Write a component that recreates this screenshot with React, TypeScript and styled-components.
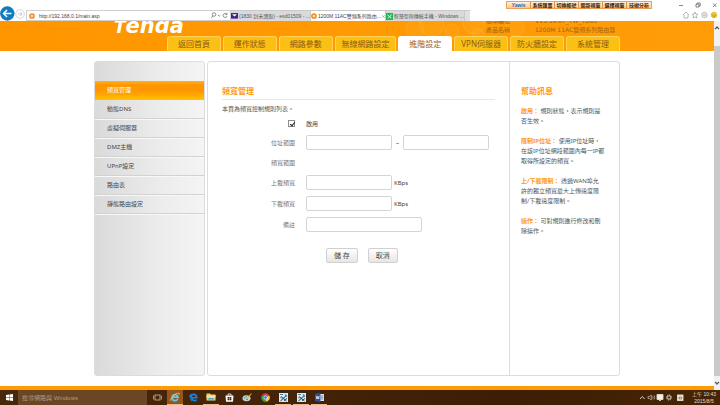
import React from "react";
import styled, { createGlobalStyle } from "styled-components";

const ui = `"Liberation Sans", "Noto Sans CJK TC", sans-serif`;
const page = `"Noto Sans", "Noto Sans CJK TC", sans-serif`;

const GlobalStyle = createGlobalStyle`
  * { box-sizing: border-box; }
  body { margin: 0; background: #fff; font-family: ${page}; font-size: 6px; color: #555; }
  button, input { font: inherit; color: inherit; margin: 0; padding: 0; }
  button { border: 0; background: none; }
  a { color: inherit; text-decoration: none; }
  svg { display: block; flex: none; }
`;

const Screen = styled.div`
  display: flex;
  flex-direction: column;
  height: 100vh;
  overflow: hidden;
`;

/* ---------- browser frame ---------- */

const Chrome = styled.header`
  display: flex;
  align-items: flex-end;
  height: 21px;
  flex: none;
  font-family: ${ui};
  font-size: 5px;
  line-height: 10px;
`;

const RoundButton = styled.button`
  display: flex;
  flex: none;
`;

const AddressBar = styled.div`
  display: flex;
  align-items: center;
  gap: 4px;
  width: 205px;
  height: 11px;
  margin-left: 1px;
  padding: 0 2px;
  border: 1px solid #cfcfcf;
  background: #fff;
`;

const UrlInput = styled.input`
  flex: 1;
  min-width: 0;
  height: 9px;
  border: 0;
  outline: 0;
  background: none;
  color: #444;
`;

const BrowserTabs = styled.div`
  display: flex;
  flex: none;
  height: 11px;
`;

const BrowserTab = styled.button<{ $active?: boolean }>`
  display: flex;
  align-items: center;
  gap: 1px;
  padding: 0;
  border: 1px solid #c9c9c9;
  border-width: 1px 1px 0 0;
  background: ${(p) => (p.$active ? "#fff" : "#dadada")};
  color: ${(p) => (p.$active ? "#444" : "#555")};
  white-space: nowrap;
`;

const NewTab = styled.button`
  width: 5px;
  background: #e0e0e0;
  border-top: 1px solid #c9c9c9;
`;

const WindowArea = styled.div`
  flex: 1;
  display: flex;
  justify-content: flex-end;
  align-self: stretch;
  align-items: flex-start;
`;

const QuickBar = styled.div`
  display: flex;
  margin: 1px 22px 0 0;
  height: 8px;
  border: 1px solid #e9a25c;
  background: linear-gradient(#fff3e2, #ffc684);
`;

const QuickButton = styled.button<{ $brand?: boolean }>`
  width: 24px;
  border-right: 1px solid #e58f3c;
  color: ${(p) => (p.$brand ? "#2a62b8" : "#3a1d08")};
  font-weight: 700;
  font-style: ${(p) => (p.$brand ? "italic" : "normal")};
  line-height: 6px;
  white-space: nowrap;
  &:last-child { border-right: 0; }
`;

const WindowTools = styled.div`
  display: grid;
  grid-template-rows: 10px 9px;
  width: 44px;
  margin-right: 2px;
`;

const IconRow = styled.div`
  display: flex;
  align-items: center;
  justify-content: flex-end;
`;

/* ---------- router page ---------- */

const Viewport = styled.div`
  display: flex;
  flex: 1;
  min-height: 0;
`;

const Page = styled.div`
  display: flex;
  flex-direction: column;
  flex: 1;
  min-width: 0;
`;

const Banner = styled.div`
  position: relative;
  display: flex;
  align-items: flex-end;
  justify-content: center;
  height: 30px;
  flex: none;
  overflow: hidden;
  background: linear-gradient(90deg, #ff9600, #ff9c08);
`;

const Bubbles = styled.svg`
  position: absolute;
  top: 0;
  left: 390px;
`;

const BannerInner = styled.div`
  position: relative;
  display: flex;
  flex-direction: column;
  width: 100%;
  max-width: 526px;
  padding-left: 20px;
`;

const BrandLine = styled.div`
  display: flex;
  justify-content: space-between;
  align-items: flex-end;
  height: 22px;
`;

const Logo = styled.div`
  font: italic 700 21px/24px "DejaVu Sans", sans-serif;
  color: #fff;
  height: 22px;
  small { font-size: 17px; }
`;

const ProductInfo = styled.dl`
  display: grid;
  grid-template-columns: 49px 86px;
  grid-auto-rows: 9px;
  align-content: end;
  margin: 0 -1px 2px 0;
  font: 6px/9px "DejaVu Sans", "Noto Sans CJK TC", sans-serif;
  color: #a4660c;
  white-space: nowrap;
  dt, dd { margin: 0; }
`;

const Nav = styled.nav`
  display: flex;
  gap: 2px;
  margin-left: 53px;
`;

const NavTab = styled.a<{ $active?: boolean; $wide?: boolean }>`
  flex: ${(p) => (p.$wide ? "62 1 0" : "54 1 0")};
  height: 15px;
  border: 1px solid ${(p) => (p.$active ? "#fff" : "#ffd358")};
  border-bottom: 0;
  border-radius: 3px 3px 0 0;
  background: ${(p) => (p.$active ? "#fff" : "#fcc014")};
  color: ${(p) => (p.$active ? "#a0622a" : "#8a5a16")};
  font-size: 8px;
  line-height: 13px;
  text-align: center;
  white-space: nowrap;
`;

const Main = styled.main`
  display: flex;
  gap: 2px;
  flex: 1;
  width: 100%;
  max-width: 526px;
  margin: 0 auto;
  padding: 10px 0;
`;

const Sidebar = styled.aside`
  width: 111px;
  padding-top: 19px;
  border: 1px solid #dcdcdc;
  border-radius: 3px;
  background: linear-gradient(90deg, #dadada, #ececec 60%, #f4f4f4);
`;

const MenuItem = styled.a<{ $active?: boolean }>`
  display: block;
  height: 19px;
  padding-left: 12px;
  border-bottom: 1px solid ${(p) => (p.$active ? "#ffc400" : "#d2d2d2")};
  box-shadow: ${(p) => (p.$active ? "none" : "0 1px 0 #f8f8f8")};
  background: ${(p) =>
    p.$active ? "linear-gradient(#ffb21a, #ff9400 25%, #ff9a00 60%, #ffbe00)" : "transparent"};
  color: ${(p) => (p.$active ? "#fff" : "#444")};
  line-height: 18px;
`;

const Panel = styled.div`
  display: flex;
  flex: 1;
  border: 1px solid #dcdcdc;
  border-radius: 3px;
  background: #fff;
`;

const Content = styled.section`
  flex: 1;
  padding: 20px 14px 0;
`;

const Heading = styled.h2<{ $ruled?: boolean }>`
  margin: 0 0 ${(p) => (p.$ruled ? 4 : 6)}px;
  height: 18px;
  border-bottom: ${(p) => (p.$ruled ? "1px solid #e8e8e8" : "0")};
  color: #ff9a10;
  font-size: 8px;
  line-height: 17px;
`;

const Intro = styled.p`
  margin: 0 0 3px;
  line-height: 11px;
`;

const Form = styled.form`
  display: grid;
  row-gap: 6px;
`;

const Row = styled.div<{ $h: number }>`
  display: grid;
  grid-template-columns: 73px 1fr;
  column-gap: 11px;
  align-items: center;
  height: ${(p) => p.$h}px;
  white-space: nowrap;
`;

const RowLabel = styled.label`
  text-align: right;
  color: #777;
`;

const Field = styled.div`
  display: flex;
  align-items: center;
  gap: 2px;
  color: #444;
`;

const TextInput = styled.input<{ $wide?: boolean }>`
  width: ${(p) => (p.$wide ? 116 : 86)}px;
  height: 15px;
  padding: 0 3px;
  border: 1px solid #d4d4d4;
  border-radius: 2px;
  background: #fff;
`;

const Dash = styled.span`
  width: 7px;
  text-align: center;
`;

const CheckBox = styled.input`
  appearance: none;
  justify-self: end;
  width: 7px;
  height: 7px;
  border: 1px solid #8c8c8c;
  background: #fff;
  &:checked::before {
    content: "";
    display: block;
    width: 2px;
    height: 4px;
    margin-left: 2px;
    border: solid #222;
    border-width: 0 1px 1px 0;
    transform: rotate(40deg);
  }
`;

const Actions = styled.div`
  display: flex;
  gap: 10px;
  margin: 10px 0 0 104px;
`;

const ActionButton = styled.button`
  height: 15px;
  padding: 0 7px;
  border: 1px solid #d0d0d0;
  border-radius: 2px;
  background: linear-gradient(#fff, #e6e6e6);
  color: #444;
  font-size: 7px;
  line-height: 13px;
`;

const Help = styled.aside`
  width: 110px;
  padding: 20px 0 0 11px;
  border-left: 1px solid #dcdcdc;
  p { margin: 0 0 10px; line-height: 10px; white-space: nowrap; }
  strong { color: #ff9a10; }
`;

const Footer = styled.footer`
  height: 4px;
  background: #ff9a00;
`;

const ScrollBar = styled.div`
  display: flex;
  flex-direction: column;
  align-items: center;
  width: 6px;
  padding: 5px 0;
  background: #f1f1f1;
`;

const ScrollThumb = styled.div`
  flex: 1;
  align-self: stretch;
  margin: 16px 0 5px;
  background: #cacaca;
`;

/* ---------- taskbar ---------- */

const Taskbar = styled.footer`
  display: flex;
  height: 15px;
  flex: none;
  background: linear-gradient(90deg, #4a260a, #442308 40%, #3d1e04 70%, #462406);
  color: #e9dccf;
`;

const StartButton = styled.button`
  display: grid;
  place-items: center;
  width: 18px;
`;

const SearchInput = styled.input`
  width: 129px;
  border: 0;
  padding-left: 4px;
  background: #6a4624;
  font-family: ${ui};
  &::placeholder { color: #b49a80; opacity: 1; }
`;

const TaskButton = styled.button<{ $state?: "open" | "active" }>`
  display: grid;
  place-items: center;
  width: 16px;
  margin-left: 2px;
  border-bottom: 1px solid ${(p) => (p.$state ? "#e8b48a" : "transparent")};
  background: ${(p) => (p.$state === "active" ? "#94561c" : "transparent")};
`;

const Tray = styled.div`
  display: flex;
  align-items: center;
  gap: 3px;
  margin-left: auto;
`;

const Clock = styled.time`
  width: 26px;
  margin: 0 3px 0 4px;
  font-family: ${ui};
  font-size: 5px;
  line-height: 7px;
  text-align: center;
  white-space: nowrap;
`;

/* ---------- icons ---------- */

const BackIcon = () => (
  <svg width="15" height="15" viewBox="0 0 15 15">
    <circle cx="7.3" cy="7.5" r="7.2" fill="#0f7bc0" />
    <path d="M11.5 7.5H4M7 4L3.6 7.5L7 11" fill="none" stroke="#fff" strokeWidth="1.6" />
  </svg>
);

const ForwardIcon = () => (
  <svg width="10" height="13" viewBox="0 0 10 13">
    <circle cx="5" cy="6" r="4.3" fill="#fff" stroke="#c4c4c4" strokeWidth=".7" />
    <path d="M2.8 6H7M5.3 4L7.2 6L5.3 8" fill="none" stroke="#bbb" strokeWidth=".8" />
  </svg>
);

const SiteIcon = () => (
  <svg width="6" height="6" viewBox="0 0 6 6">
    <circle cx="3" cy="3" r="2.1" fill="#fff" stroke="#f28a1c" strokeWidth="1.5" />
    <circle cx="3" cy="3" r=".7" fill="#f28a1c" />
  </svg>
);

const SearchRefresh = () => (
  <svg width="17" height="7" viewBox="0 0 17 7" fill="none" stroke="#666" strokeWidth=".7">
    <circle cx="3" cy="2.5" r="1.8" />
    <path d="M1.8 3.9L.3 6" />
    <path d="M7 3L8.2 4.2L9.4 3" />
    <path d="M15.7 2.3A2 2 0 1 0 16 4M16 .8V2.6H14.3" />
  </svg>
);

const MailIcon = () => (
  <svg width="7" height="6" viewBox="0 0 7 6">
    <rect width="7" height="5.6" fill="#4a1d96" />
    <path d="M1 1.2H6L3.5 3.6Z" fill="#fff" />
  </svg>
);

const GreenIcon = () => (
  <svg width="7" height="7" viewBox="0 0 7 7">
    <rect width="7" height="7" fill="#23b45a" />
    <path d="M1.5 2L5.5 5M5.5 1.5L2 5.5" stroke="#d9ffe5" strokeWidth="1" />
  </svg>
);

const CloseX = () => (
  <svg width="3" height="3" viewBox="0 0 3 3">
    <path d="M.3.3L2.7 2.7M2.7.3L.3 2.7" stroke="#777" strokeWidth=".5" />
  </svg>
);

const WinControls = () => (
  <svg width="40" height="8" viewBox="0 0 40 8" fill="none" stroke="#555" strokeWidth=".7">
    <path d="M1 4.5H5" />
    <path d="M18 3.2H21V6H18ZM19 3.2V2H22.2V5H21" />
    <path d="M35 2.5L38.4 6M38.4 2.5L35 6" />
  </svg>
);

const PageTools = () => (
  <svg width="36" height="8" viewBox="0 0 36 8" fill="none" stroke="#9a9a9a" strokeWidth=".7">
    <path d="M1 4L4 1L7 4M2 3.5V7H6V3.5" />
    <path d="M13 1L13.9 3.1L16 3.3L14.4 4.8L14.9 7L13 5.9L11.1 7L11.6 4.8L10 3.3L12.1 3.1Z" />
    <circle cx="22.5" cy="4" r="2.7" />
    <circle cx="22.5" cy="4" r="1" />
    <circle cx="32" cy="4" r="2.8" fill="#f7cf3e" stroke="#d9a91e" />
    <path d="M30.6 4.6Q32 6 33.4 4.6M31 3V3.5M33 3V3.5" stroke="#7b5a00" />
  </svg>
);

const Arrow = ({ up }: { up?: boolean }) => (
  <svg width="6" height="4" viewBox="0 0 6 4">
    <path d={up ? "M1 3.2L3 1L5 3.2" : "M1 .8L3 3L5 .8"} fill="none" stroke="#555" strokeWidth="1.2" />
  </svg>
);

const WindowsIcon = () => (
  <svg width="7" height="7" viewBox="0 0 7 7" fill="#fff">
    <path d="M0 1L3 .6V3.3H0ZM3.4.5L7 0V3.3H3.4ZM0 3.7H3V6.4L0 6ZM3.4 3.7H7V7L3.4 6.5Z" />
  </svg>
);

const TaskViewIcon = () => (
  <svg width="9" height="7" viewBox="0 0 9 7" fill="none" stroke="#c9b8a6" strokeWidth=".8">
    <rect x="2" y="1" width="5" height="5" />
    <path d="M.6 1.5V5.5M8.4 1.5V5.5" />
  </svg>
);

const IeIcon = () => (
  <svg width="10" height="10" viewBox="0 0 10 10" fill="none">
    <path d="M7.9 6.6A3 3 0 1 1 8 5.2H3" stroke="#5cc8f5" strokeWidth="1.7" />
    <path d="M1 9C-.6 7 5 1 9 1C9.8 1.4 9 2.4 8.6 3" stroke="#f5d24c" strokeWidth=".8" />
  </svg>
);

const EdgeIcon = () => (
  <svg width="9" height="9" viewBox="0 0 9 9" fill="none">
    <path d="M.8 4.2C1.6.4 7.6.2 7.8 4.8H3C3 8 6 8 7.6 7" stroke="#1683e0" strokeWidth="1.6" />
    <path d="M3.4 2.6C1.2 4 1.2 7 3.4 8" stroke="#1683e0" strokeWidth="1.2" />
  </svg>
);

const FolderIcon = () => (
  <svg width="10" height="8" viewBox="0 0 10 8">
    <path d="M.5 .5H4L5 1.5H9.5V7.5H.5Z" fill="#f3cd62" />
    <rect x=".5" y="2.5" width="9" height="2" fill="#fbe6a0" />
    <path d="M2.5 7.8V5H7.5V7.8H6.3V6.3H3.7V7.8Z" fill="#3aa7dd" />
  </svg>
);

const StoreIcon = () => (
  <svg width="9" height="9" viewBox="0 0 9 9">
    <path d="M3 2.5V1H6V2.5" fill="none" stroke="#fff" strokeWidth=".8" />
    <path d="M.5 2.5H8.5L8 8.7H1Z" fill="#fff" />
    <path d="M2.6 4H4.2V5.4H2.6ZM4.6 4H6.4V5.4H4.6ZM2.6 5.8H4.2V7.3H2.6ZM4.6 5.8H6.4V7.3H4.6Z" fill="#442308" />
  </svg>
);

const PaintIcon = () => (
  <svg width="10" height="9" viewBox="0 0 10 9">
    <ellipse cx="4.5" cy="5.2" rx="4" ry="3" fill="#c8d6dc" />
    <circle cx="2.5" cy="5" r=".8" fill="#3b8ed0" />
    <circle cx="4.2" cy="3.7" r=".8" fill="#58a847" />
    <circle cx="5" cy="6.4" r=".8" fill="#d0472e" />
    <path d="M9.5 .5L5.5 5" stroke="#e8a33c" strokeWidth="1.1" />
  </svg>
);

const ChromeIcon = () => (
  <svg width="9" height="9" viewBox="0 0 9 9">
    <path d="M4.5 4.5L.8 2.3A4.3 4.3 0 0 1 8.3 2.4Z" fill="#e2412f" />
    <path d="M4.5 4.5L8.3 2.4A4.3 4.3 0 0 1 4.4 8.8Z" fill="#f8cc30" />
    <path d="M4.5 4.5L4.4 8.8A4.3 4.3 0 0 1 .8 2.3Z" fill="#35a34e" />
    <circle cx="4.5" cy="4.5" r="1.9" fill="#fff" />
    <circle cx="4.5" cy="4.5" r="1.4" fill="#3f7ee8" />
  </svg>
);

const ToolIcon = () => (
  <svg width="9" height="9" viewBox="0 0 9 9">
    <rect width="9" height="9" fill="#dfeaf0" />
    <path d="M1 1.5H4M6 1.5L8 3.5M1.5 8L7.5 2.5" stroke="#3382ae" strokeWidth="1.1" />
    <path d="M2 3.5L7.5 8M5 7.8L8 5.4" stroke="#33424e" strokeWidth="1" />
    <circle cx="2" cy="4.6" r=".8" fill="#d2543c" />
  </svg>
);

const WordIcon = () => (
  <svg width="9" height="9" viewBox="0 0 9 9">
    <rect x="4" y="1" width="5" height="7" fill="#dbe5f5" />
    <path d="M5.5 2.8H8.3M5.5 4.4H8.3M5.5 6H8.3" stroke="#3b64a8" strokeWidth=".6" />
    <path d="M0 1L5.4 0V9L0 8Z" fill="#2a5699" />
    <path d="M1.2 3L1.9 6L2.7 3.4L3.5 6L4.2 3" fill="none" stroke="#fff" strokeWidth=".7" />
  </svg>
);

const TrayIcons = () => (
  <svg width="45" height="9" viewBox="0 0 45 9" fill="none" stroke="#e6dccf" strokeWidth=".9">
    <path d="M1 6L3.3 3.5L5.6 6" />
    <path d="M9 3.5H10.5L12.3 2V7L10.5 5.5H9ZM13.6 3.2Q14.6 4.5 13.6 5.8M15 2.3Q16.6 4.5 15 6.7" strokeWidth=".6" />
    <path d="M18 1.5H24V6.5H22L21 8L20 6.5H18Z" fill="#f5efe8" />
    <circle cx="30" cy="4.5" r="1.7" />
    <circle cx="30" cy="4.5" r="2.6" strokeDasharray="1 1" />
    <rect x="38.5" y="2" width="5.5" height="5.5" fill="#f5efe8" />
    <path d="M40 4H42.6V6H40Z" stroke="#5a3a1c" strokeWidth=".6" />
  </svg>
);

/* ---------- data ---------- */

const navItems = ["返回首頁", "運作狀態", "網路參數", "無線網路設定", "進階設定", "VPN伺服器", "防火牆設定", "系統管理"];
const menuItems = ["頻寬管理", "動態DNS", "虛擬伺服器", "DMZ主機", "UPnP設定", "路由表", "靜態路由設定"];
const quickItems = ["系統匯置", "切換帳號", "關新視窗", "選擇視窗", "技術分析"];

const helpItems: { term: string; lines: string[] }[] = [
  { term: "啟用：", lines: ["規則狀態，表示規則是", "否生效。"] },
  { term: "限制IP位址：", lines: ["使用IP位址時，", "在該IP位址網段範圍內每一IP都", "取得所設定的頻寬。"] },
  { term: "上/下載限制：", lines: ["透過WAN埠允", "許的獨立頻寬最大上傳速度限", "制/下載速度限制。"] },
  { term: "操作：", lines: ["可對規則進行修改和刪", "除操作。"] },
];

const tasks: { name: string; icon: React.ReactNode; state?: "open" | "active" }[] = [
  { name: "工作檢視", icon: <TaskViewIcon /> },
  { name: "Internet Explorer", icon: <IeIcon />, state: "active" },
  { name: "Edge", icon: <EdgeIcon /> },
  { name: "檔案總管", icon: <FolderIcon />, state: "open" },
  { name: "市集", icon: <StoreIcon /> },
  { name: "小畫家", icon: <PaintIcon /> },
  { name: "Chrome", icon: <ChromeIcon /> },
  { name: "工具一", icon: <ToolIcon />, state: "open" },
  { name: "工具二", icon: <ToolIcon />, state: "open" },
  { name: "Word", icon: <WordIcon />, state: "open" },
];

export default function App() {
  return (
    <Screen>
      <GlobalStyle />
      <Chrome>
        <RoundButton aria-label="上一頁"><BackIcon /></RoundButton>
        <RoundButton aria-label="下一頁"><ForwardIcon /></RoundButton>
        <AddressBar>
          <SiteIcon />
          <UrlInput aria-label="網址" defaultValue="http://192.168.0.1/main.asp" />
          <SearchRefresh />
        </AddressBar>
        <BrowserTabs>
          <BrowserTab><MailIcon />(1830 封未讀取) - esd01509 - ...</BrowserTab>
          <BrowserTab $active><SiteIcon />1200M 11AC雙頻系列路由...<CloseX /></BrowserTab>
          <BrowserTab><GreenIcon />智慧型與傳統手機 - Windows ...</BrowserTab>
          <NewTab aria-label="新索引標籤" />
        </BrowserTabs>
        <WindowArea>
          <QuickBar>
            <QuickButton $brand>Yawis</QuickButton>
            {quickItems.map((t) => <QuickButton key={t}>{t}</QuickButton>)}
          </QuickBar>
          <WindowTools>
            <IconRow><WinControls /></IconRow>
            <IconRow><PageTools /></IconRow>
          </WindowTools>
        </WindowArea>
      </Chrome>

      <Viewport>
        <Page>
          <Banner>
            <Bubbles width="150" height="30" viewBox="0 0 150 30" fill="#ffb52e" fillOpacity=".2" stroke="#ffc450" strokeOpacity=".3">
              <circle cx="25" cy="8" r="9" />
              <circle cx="42" cy="3" r="12" />
              <circle cx="62" cy="10" r="7" />
              <circle cx="84" cy="2" r="11" />
              <circle cx="88" cy="14" r="6" />
              <circle cx="125" cy="6" r="9" />
            </Bubbles>
            <BannerInner>
              <BrandLine>
                <Logo><small>T</small>enda</Logo>
                <ProductInfo>
                  <dt>版本編號</dt><dd>V15.10.07_TW_TD01</dd>
                  <dt>產品名稱</dt><dd>1200M 11AC雙頻系列路由器</dd>
                </ProductInfo>
              </BrandLine>
              <Nav>
                {navItems.map((t) => (
                  <NavTab key={t} href="#" $active={t === "進階設定"} $wide={t === "無線網路設定"}>{t}</NavTab>
                ))}
              </Nav>
            </BannerInner>
          </Banner>

          <Main>
            <Sidebar>
              {menuItems.map((t, i) => <MenuItem key={t} href="#" $active={i === 0}>{t}</MenuItem>)}
            </Sidebar>
            <Panel>
              <Content>
                <Heading $ruled>頻寬管理</Heading>
                <Intro>本頁為頻寬控制規則列表。</Intro>
                <Form onSubmit={(e) => e.preventDefault()}>
                  <Row $h={11}>
                    <CheckBox id="enable" type="checkbox" defaultChecked />
                    <Field as="label" htmlFor="enable">啟用</Field>
                  </Row>
                  <Row $h={15}>
                    <RowLabel htmlFor="ip-from">位址範圍</RowLabel>
                    <Field>
                      <TextInput id="ip-from" />
                      <Dash>~</Dash>
                      <TextInput aria-label="位址範圍結束" />
                    </Field>
                  </Row>
                  <Row $h={13}><RowLabel as="span">頻寬範圍</RowLabel></Row>
                  <Row $h={15}>
                    <RowLabel htmlFor="up">上載頻寬</RowLabel>
                    <Field><TextInput id="up" />KBps</Field>
                  </Row>
                  <Row $h={15}>
                    <RowLabel htmlFor="down">下載頻寬</RowLabel>
                    <Field><TextInput id="down" />KBps</Field>
                  </Row>
                  <Row $h={15}>
                    <RowLabel htmlFor="note">備註</RowLabel>
                    <Field><TextInput id="note" $wide /></Field>
                  </Row>
                  <Actions>
                    <ActionButton type="submit">儲 存</ActionButton>
                    <ActionButton type="button">取消</ActionButton>
                  </Actions>
                </Form>
              </Content>
              <Help>
                <Heading>幫助訊息</Heading>
                {helpItems.map((h) => (
                  <p key={h.term}>
                    <strong>{h.term}</strong>{" "}
                    {h.lines.map((l, i) => (
                      <React.Fragment key={l}>{i > 0 && <br />}{l}</React.Fragment>
                    ))}
                  </p>
                ))}
              </Help>
            </Panel>
          </Main>
          <Footer />
        </Page>
        <ScrollBar>
          <Arrow up />
          <ScrollThumb />
          <Arrow />
        </ScrollBar>
      </Viewport>

      <Taskbar>
        <StartButton aria-label="開始"><WindowsIcon /></StartButton>
        <SearchInput aria-label="搜尋" placeholder="搜尋網路與 Windows" />
        {tasks.map((t) => (
          <TaskButton key={t.name} aria-label={t.name} $state={t.state}>{t.icon}</TaskButton>
        ))}
        <Tray>
          <TrayIcons />
          <Clock>上午 10:43<br />2015/8/5</Clock>
        </Tray>
      </Taskbar>
    </Screen>
  );
}
